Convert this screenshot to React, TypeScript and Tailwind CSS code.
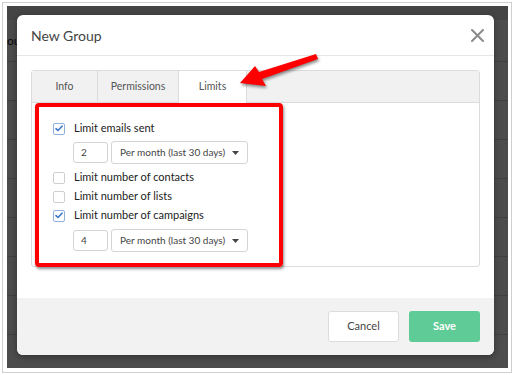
import React from 'react';

type Row = { label: string; checked: boolean; amount?: string };

const rows: Row[] = [
  { label: 'Limit emails sent', checked: true, amount: '2' },
  { label: 'Limit number of contacts', checked: false },
  { label: 'Limit number of lists', checked: false },
  { label: 'Limit number of campaigns', checked: true, amount: '4' },
];

// Checkbox drawn by hand so it keeps the flat look of the screenshot
function Check({ checked }: { checked: boolean }) {
  return (
    <span
      className={
        checked
          ? 'flex h-[12px] w-[12px] items-center justify-center rounded-[2px] border border-[#8fb1e0] bg-white'
          : 'flex h-[12px] w-[12px] items-center justify-center rounded-[2px] border border-[#cfcfcf] bg-white'
      }
    >
      {checked && (
        <svg width="8" height="7" viewBox="0 0 8 7" fill="none">
          <path d="M1 3.6 L3 5.5 L7 1.2" stroke="#3b78c9" strokeWidth="1.6" strokeLinecap="round" strokeLinejoin="round" />
        </svg>
      )}
    </span>
  );
}

function PeriodRow({ amount }: { amount: string }) {
  return (
    <div className="ml-[20px] mt-[3px] flex items-center gap-[3px]">
      <div className="flex h-[21px] w-[35px] items-center rounded-[3px] border border-[#d4d4d4] pl-[7px] text-[10px] text-[#444]">
        {amount}
      </div>
      <div className="flex h-[23px] w-[137px] items-center justify-between whitespace-nowrap rounded-[3px] border border-[#d4d4d4] bg-white pl-[8px] pr-[8px] text-[10px] text-[#444]">
        <span>Per month (last 30 days)</span>
        <svg width="7" height="4" viewBox="0 0 7 4">
          <path d="M0 0 H7 L3.5 4 Z" fill="#444" />
        </svg>
      </div>
    </div>
  );
}

export default function App() {
  return (
    <div className="relative h-[375px] w-[514px] bg-white p-[2px] font-['Lato','Open_Sans',sans-serif]">
      <div className="h-full border border-[#cfcfcf] pb-[4px] pl-[4px] pr-[3px] pt-[3px]">
        <div className="relative h-full overflow-hidden bg-[#f1f1f1]">
          {/* page behind the modal */}
          <div className="h-[14px] bg-[#e4e4e4]" />
          <div className="flex h-[42px] items-center border-b border-[#d6d6d6] bg-white">
            <span className="text-[12px] text-[#222]">ou</span>
          </div>
          {[0, 1, 2, 3, 4, 5, 6, 7].map((i) => (
            <div key={i} className="h-[39px] border-b border-[#d6d6d6] bg-white" />
          ))}

          {/* overlay + modal */}
          <div className="absolute inset-0 bg-black/70 pl-[10px] pt-[9px]">
            <div className="flex h-[340px] w-[477px] flex-col overflow-hidden rounded-[6px] bg-white shadow-[0_2px_6px_rgba(0,0,0,0.35)]">
              <div className="flex h-[41px] shrink-0 items-center justify-between border-b border-[#e6e6e6] pl-[14px] pr-[10px]">
                <span className="text-[14px] text-[#444]">New Group</span>
                <svg width="13" height="13" viewBox="0 0 13 13">
                  <path d="M1 1 L12 12 M12 1 L1 12" stroke="#8a8a8a" strokeWidth="2" strokeLinecap="round" />
                </svg>
              </div>

              <div className="h-[242px] shrink-0 px-[14px] pt-[14px]">
                <div className="relative h-[197px] rounded-[3px] border border-[#dcdcdc]">
                  <div className="flex h-[32px] border-b border-[#dcdcdc] bg-[#f1f1f1] text-[10.5px] text-[#555]">
                    <div className="flex w-[66px] items-center justify-center border-r border-[#dcdcdc]">Info</div>
                    <div className="flex w-[81px] items-center justify-center border-r border-[#dcdcdc]">Permissions</div>
                    <div className="-mb-[1px] flex w-[68px] items-center justify-center border-r border-[#dcdcdc] bg-white">
                      Limits
                    </div>
                  </div>

                  <div className="pl-[21px] pt-[16px]">
                    {rows.map((r, i) => (
                      <div key={r.label} className={i === 1 ? 'mt-[4px]' : ''}>
                        <div className="flex h-[19px] items-center gap-[9px]">
                          <Check checked={r.checked} />
                          <span className="text-[11px] text-[#222]">{r.label}</span>
                        </div>
                        {r.amount && i === 0 && <PeriodRow amount={r.amount} />}
                        {r.amount && i === 3 && (
                          <div className="pt-[1px]">
                            <PeriodRow amount={r.amount} />
                          </div>
                        )}
                      </div>
                    ))}
                  </div>

                  {/* red annotation box */}
                  <div className="absolute left-[3px] top-[32px] h-[164px] w-[248px] rounded-[4px] border-[4px] border-[#ff0000] shadow-[1px_2px_3px_rgba(0,0,0,0.45)]" />
                </div>
              </div>

              <div className="flex flex-1 items-center justify-end gap-[10px] bg-[#f2f2f2] px-[14px]">
                <button className="h-[31px] w-[71px] rounded-[3px] border border-[#dcdcdc] bg-white text-[11px] text-[#444]">
                  Cancel
                </button>
                <button className="h-[31px] w-[71px] rounded-[3px] bg-[#5fcb96] text-[11px] font-bold text-white">
                  Save
                </button>
              </div>
            </div>
          </div>
        </div>
      </div>

      {/* red arrow pointing at the Limits tab */}
      <svg
        className="pointer-events-none absolute left-0 top-0 drop-shadow-[1px_2px_1.5px_rgba(0,0,0,0.45)]"
        width="514"
        height="375"
        viewBox="0 0 514 375"
      >
        <polygon points="316,54 318,59 262,79 266,86 240,83 255,66 259,72" fill="#ff0000" />
      </svg>
    </div>
  );
}
